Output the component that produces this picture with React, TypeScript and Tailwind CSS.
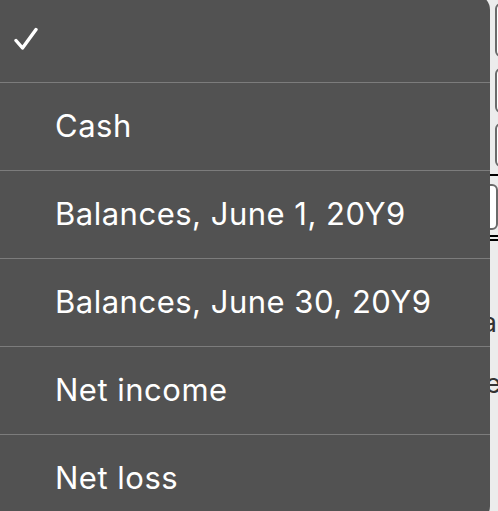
import React from "react";

const items = ["", "Cash", "Balances, June 1, 20Y9", "Balances, June 30, 20Y9", "Net income", "Net loss"];

function Check() {
  return (
    <svg width="24" height="24" viewBox="0 0 24 24" fill="none">
      <path d="M2 13.5 L8.5 21 L22 2.5" stroke="white" strokeWidth="3.4" strokeLinecap="round" strokeLinejoin="round" />
    </svg>
  );
}

function Box({ h, mt }: { h: string; mt: string }) {
  return <div className={`${h} ${mt} ml-[495px] w-10 rounded-md border-2 border-[#6b6b6b] bg-white`} />;
}

export default function App() {
  return (
    <div className="relative h-[511px] w-[498px] overflow-hidden bg-[#ececec] font-['Inter',sans-serif]">
      {/* page underneath */}
      <div className="flex flex-col">
        <Box h="h-[54px]" mt="mt-[3px]" />
        <Box h="h-[45px]" mt="mt-[11px]" />
        <Box h="h-[44px]" mt="mt-[10px]" />
        <div className="mt-[7px] h-[2px] bg-black" />
        <div className="mt-[8px] flex items-center">
          <div className="w-[494px] text-right text-[26px] font-medium leading-none text-[#222]">s</div>
          <div className="ml-px h-[46px] w-10 rounded-md border-2 border-[#6b6b6b] bg-white" />
        </div>
        <div className="mt-[5px] h-[2px] bg-black" />
        <div className="mt-[2px] h-[2px] bg-black" />
        <div className="mt-[68px] w-[497px] text-right text-[27px] leading-none text-[#333]">a</div>
        <div className="mt-[34px] w-[501px] text-right text-[27px] leading-none text-[#333]">e</div>
      </div>

      {/* dropdown menu */}
      <div className="absolute left-0 top-[-6px] w-[490px] overflow-hidden rounded-r-[16px] bg-[#525252]">
        {items.map((label, i) => (
          <div
            key={i}
            className={`flex h-[88px] items-center ${i > 0 ? "border-t border-[#7c7c7c]" : ""}`}
          >
            {i === 0 ? (
              <div className="ml-[14px] mt-[2px]">
                <Check />
              </div>
            ) : (
              <span className="pl-[55px] text-[31px] tracking-[0.5px] text-white">{label}</span>
            )}
          </div>
        ))}
      </div>
    </div>
  );
}
